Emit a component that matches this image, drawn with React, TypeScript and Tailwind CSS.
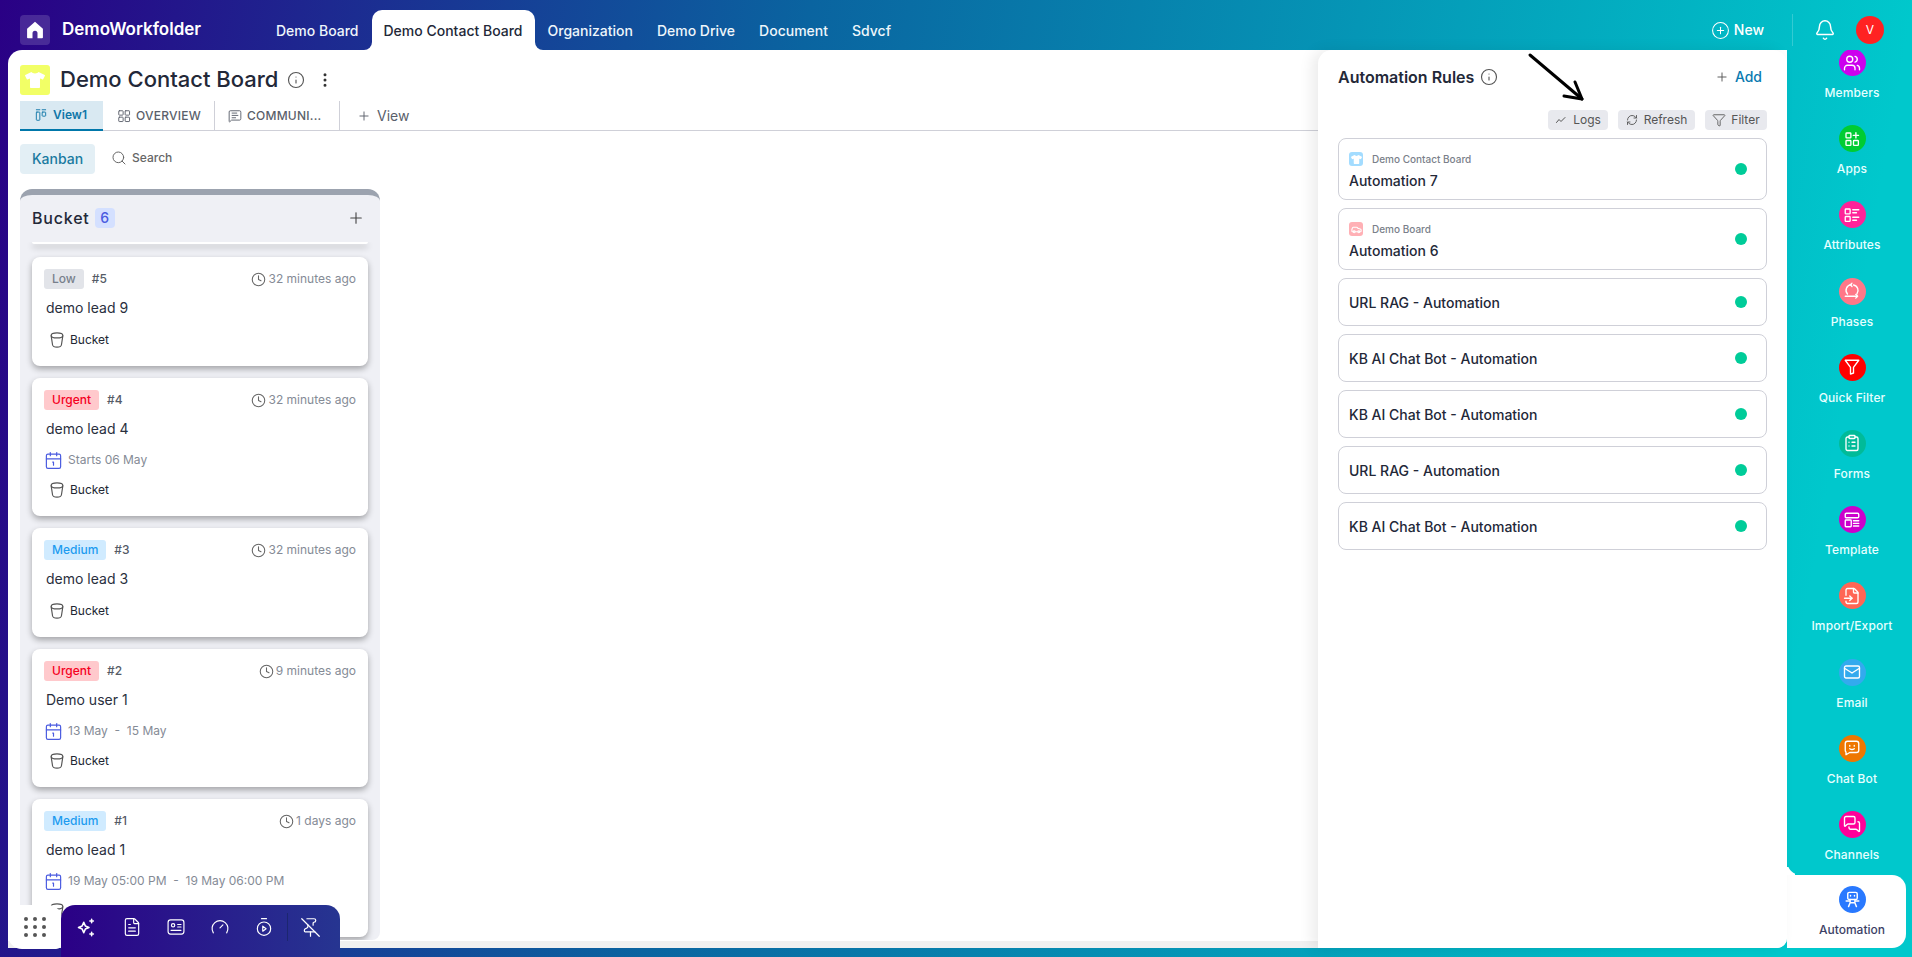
import { Bell, Calendar1, Car, CirclePlus, ClipboardList, Clock, EllipsisVertical, FileInput, FileText, Funnel, Info, Mail, MessagesSquare, MessageSquareText, PinOff, Plus, RefreshCw, Search, Users } from 'lucide-react';
import { FaTshirt } from 'react-icons/fa';
import type { ReactNode } from 'react';

const Svg = ({ size = 18, width = 1.8, children }: { size?: number; width?: number; children: ReactNode }) => (
  <svg width={size} height={size} viewBox="0 0 24 24" fill="none" stroke="currentColor" strokeWidth={width} strokeLinecap="round" strokeLinejoin="round" className="shrink-0">
    {children}
  </svg>
);

const BucketIcon = () => (
  <Svg size={20} width={1.4}>
    <ellipse cx="12" cy="6.500" rx="7" ry="3" />
    <path d="M5 7l1.700 11c.3 1.500 2.500 2.500 5.300 2.500s5-1 5.300-2.500L19 7" />
  </Svg>
);

const AppsIcon = () => (
  <Svg>
    <rect x="4" y="4" width="6.500" height="6.500" rx="1" />
    <rect x="4" y="14" width="6.500" height="6.500" rx="1" />
    <rect x="14" y="14" width="6.500" height="6.500" rx="1" />
    <path d="M17.200 3.500v7M13.700 7.200h7" />
  </Svg>
);

const AttributesIcon = () => (
  <Svg>
    <rect x="3" y="4" width="6.500" height="6.500" rx="1" />
    <rect x="3" y="14" width="6.500" height="6.500" rx="1" />
    <path d="M13 5h8M13 9h5M13 15h8M13 19h5" />
  </Svg>
);

const PhasesIcon = () => (
  <Svg>
    <path d="M6 16a7.500 7.500 0 0 1 5-12.500M14 4a7.500 7.500 0 0 1 4.500 12" />
    <path d="M3 19h16" />
    <path d="M17 16.500l2.500 2.500L17 21.500M12 1.500L9.800 3.700 12 6" />
  </Svg>
);

const TemplateIcon = () => (
  <Svg>
    <rect x="3" y="3" width="18" height="6" rx="1.500" />
    <rect x="3" y="12" width="8" height="9" rx="1" />
    <path d="M14 13h7M14 16.500h7M14 20h7" />
  </Svg>
);

const ChatBotIcon = () => (
  <Svg>
    <path d="M6 3h12a3 3 0 0 1 3 3v9a3 3 0 0 1-3 3H9l-5 3v-3.500A3 3 0 0 1 3 15V6a3 3 0 0 1 3-3z" />
    <path d="M9 8.500v1M15 8.500v1M9 13c1.800 1.300 4.200 1.300 6 0" />
  </Svg>
);

const RobotIcon = () => (
  <Svg size={19}>
    <rect x="6" y="3" width="12" height="9" rx="2" />
    <path d="M9.500 7v.5M14.500 7v.5M9 12v4h6v-4M4 14h5M15 14h5M9 16l-2 5M15 16l2 5" />
  </Svg>
);

const FunnelWide = () => (
  <Svg>
    <path d="M3 3h18l-7 9.500V20l-4 1.500v-9z" />
  </Svg>
);

const KanbanIcon = () => (
  <Svg size={14} width={1.6}>
    <path d="M4 3h6M14 3h6" />
    <rect x="4" y="7" width="6" height="14" rx="1" />
    <rect x="14" y="7" width="6" height="7" rx="1" />
  </Svg>
);

const OverviewIcon = () => (
  <Svg size={14} width={1.6}>
    <rect x="3" y="3" width="7.500" height="7.500" rx="1" />
    <rect x="14" y="3" width="7.500" height="7.500" rx="1" />
    <rect x="3" y="14" width="7.500" height="7.500" rx="1" />
    <rect x="14" y="14" width="7.500" height="7.500" rx="1" />
  </Svg>
);

const LogsIcon = () => (
  <Svg size={12} width={2}>
    <path d="M3 17l5-6 4 4 8-8" />
  </Svg>
);

const navTabs = ['Demo Board', 'Demo Contact Board', 'Organization', 'Demo Drive', 'Document', 'Sdvcf'];

const sideItems = [
  { label: 'Members', color: 'bg-[#cc00ee]', icon: <Users size={18} strokeWidth={1.8} /> },
  { label: 'Apps', color: 'bg-[#00cc33]', icon: <AppsIcon /> },
  { label: 'Attributes', color: 'bg-[#ff2299]', icon: <AttributesIcon /> },
  { label: 'Phases', color: 'bg-[#ff7788]', icon: <PhasesIcon /> },
  { label: 'Quick Filter', color: 'bg-[#ff0000]', icon: <FunnelWide /> },
  { label: 'Forms', color: 'bg-[#00bb99]', icon: <ClipboardList size={18} strokeWidth={1.8} /> },
  { label: 'Template', color: 'bg-[#cc00cc]', icon: <TemplateIcon /> },
  { label: 'Import/Export', color: 'bg-[#ff6655]', icon: <FileInput size={18} strokeWidth={1.8} /> },
  { label: 'Email', color: 'bg-[#33aaee]', icon: <Mail size={18} strokeWidth={1.8} /> },
  { label: 'Chat Bot', color: 'bg-[#ee7700]', icon: <ChatBotIcon /> },
  { label: 'Channels', color: 'bg-[#ff0099]', icon: <MessagesSquare size={18} strokeWidth={1.8} /> },
];

const priorityStyles: Record<string, string> = {
  Low: 'bg-[#e2e4e9] text-[#777f8b]',
  Urgent: 'bg-[#ffc9cc] text-[#f5001e]',
  Medium: 'bg-[#d0ebff] text-[#1d9bf0]',
};

const leads = [
  { priority: 'Low', id: '#5', time: '32 minutes ago', title: 'demo lead 9' },
  { priority: 'Urgent', id: '#4', time: '32 minutes ago', title: 'demo lead 4', date: 'Starts 06 May' },
  { priority: 'Medium', id: '#3', time: '32 minutes ago', title: 'demo lead 3' },
  { priority: 'Urgent', id: '#2', time: '9 minutes ago', title: 'Demo user 1', date: '13 May  -  15 May' },
  { priority: 'Medium', id: '#1', time: '1 days ago', title: 'demo lead 1', date: '19 May 05:00 PM  -  19 May 06:00 PM' },
];

const rules = ['URL RAG - Automation', 'KB AI Chat Bot - Automation', 'KB AI Chat Bot - Automation', 'URL RAG - Automation', 'KB AI Chat Bot - Automation'];

const LeadCard = ({ lead }: { lead: (typeof leads)[number] }) => (
  <div className="shrink-0 mx-3 mb-3 bg-white rounded-[8px] shadow-[0_3px_6px_rgba(0,0,0,0.32)] pt-3 pb-4 px-3">
    <div className="flex items-center h-5">
      <span className={`h-5 px-2 rounded-[3px] text-xs font-medium leading-5 ${priorityStyles[lead.priority]}`}>{lead.priority}</span>
      <span className="ml-2 text-xs font-medium text-[#555b66]">{lead.id}</span>
      <span className="ml-auto flex items-center gap-[2px] text-xs text-[#858b96]">
        <Clock size={15} strokeWidth={1.7} className="text-[#666]" />
        {lead.time}
      </span>
    </div>
    <div className="mt-[9px] pl-[2px] text-sm leading-5 text-[#2a2f3e]">{lead.title}</div>
    {lead.date && (
      <div className="mt-[11px] flex items-center gap-[5px] h-5 text-xs text-[#858b96] whitespace-pre">
        <Calendar1 size={19} strokeWidth={1.5} className="text-[#4a5be0]" />
        {lead.date}
      </div>
    )}
    <div className={`${lead.date ? 'mt-[10px]' : 'mt-3'} pl-[3px] flex items-center gap-[3px] h-5 text-xs text-[#222733] [&>svg]:text-[#555]`}>
      <BucketIcon />
      Bucket
    </div>
  </div>
);

export default function App() {
  return (
    <div className="relative h-screen w-full flex flex-col overflow-hidden font-['Inter',sans-serif] bg-[linear-gradient(100deg,#2a0085_0%,#0a64a0_39%,#00c8cc_92%)]">
      {/* Top bar */}
      <div className="h-[50px] shrink-0 flex items-center pt-[10px] pl-5 pr-7">
        <div className="w-[30px] h-[30px] rounded-[4px] bg-white/15 flex items-center justify-center">
          <svg width="20" height="20" viewBox="0 0 24 24" fill="white">
            <path d="M12 2L2.500 10.500V21a1 1 0 0 0 1 1H9v-6a3 3 0 0 1 6 0v6h5.500a1 1 0 0 0 1-1V10.500z" />
          </svg>
        </div>
        <div className="ml-3 w-[202px] text-[17px] font-semibold text-white">DemoWorkfolder</div>
        <div className="self-end flex h-10">
          {navTabs.map((tab) =>
            tab === 'Demo Contact Board' ? (
              <div key={tab} className="relative mx-[1px] px-3 h-10 bg-white rounded-t-[10px] text-sm font-medium leading-[42px] text-[#232838]">
                {tab}
                <span className="absolute bottom-0 -left-2 w-2 h-2 overflow-hidden">
                  <span className="block w-4 h-4 -ml-2 -mt-2 rounded-full shadow-[4px_4px_0_4px_#fff]" />
                </span>
                <span className="absolute bottom-0 -right-2 w-2 h-2 overflow-hidden">
                  <span className="block w-4 h-4 -mt-2 rounded-full shadow-[-4px_4px_0_4px_#fff]" />
                </span>
              </div>
            ) : (
              <div key={tab} className="px-3 text-sm font-medium leading-[42px] text-[#eef6fb]">
                {tab}
              </div>
            ),
          )}
        </div>
        <div className="ml-auto flex items-center gap-[4px] text-sm font-medium text-white">
          <CirclePlus size={19} strokeWidth={1.3} />
          New
        </div>
        <div className="ml-[28px] w-px h-[32px] bg-white/20" />
        <Bell size={22} strokeWidth={1.6} className="ml-[21px] text-white" />
        <div className="ml-5 w-7 h-7 rounded-full bg-[#ff2222] flex items-center justify-center text-xs text-white">V</div>
      </div>

      <div className="flex-1 min-h-0 flex">
        {/* Main panel */}
        <div className="ml-2 mb-[9px] flex-1 min-w-0 flex bg-white rounded-tl-[14px] rounded-br-[10px]">
          <div className="flex-1 min-w-0 flex flex-col">
            <div className="mt-[15px] ml-3 h-[30px] flex items-center">
              <div className="-mt-[1px] w-[30px] h-[30px] rounded-[3px] bg-[#f2ff66] flex items-center justify-center text-white">
                <FaTshirt size={20} />
              </div>
              <h1 className="ml-[10px] -mt-[2px] text-[22px] font-medium text-[#232838]">Demo Contact Board</h1>
              <Info size={18} strokeWidth={1.5} className="ml-[9px] -mt-[1px] text-[#555]" />
              <EllipsisVertical size={18} className="ml-[11px] -mt-[1px] text-[#333]" />
            </div>

            {/* View tabs */}
            <div className="mt-[6px] ml-3 h-[30px] flex border-b border-[#cfd0d8]">
              <div className="w-[83px] bg-[#d9e9f2] border-b-2 border-[#0077aa] -mb-px flex items-center justify-center gap-[5px] pr-[2px] text-xs font-semibold text-[#0f76a8]">
                <KanbanIcon />
                View1
              </div>
              <div className="w-[111px] ml-[1px] border-r border-[#cfd0d8] flex items-center pl-[13px] gap-[5px] text-xs font-medium tracking-[0.02em] text-[#5a5f6b]">
                <OverviewIcon />
                OVERVIEW
              </div>
              <div className="w-[125px] border-r border-[#cfd0d8] flex items-center pl-[13px] gap-[5px] text-xs font-medium tracking-[0.02em] text-[#5a5f6b]">
                <MessageSquareText size={14} strokeWidth={1.6} />
                COMMUNI...
              </div>
              <div className="ml-[17px] flex items-center gap-[6px] text-sm text-[#5a5f6b]">
                <Plus size={14} strokeWidth={1.6} />
                View
              </div>
            </div>

            <div className="mt-[13px] ml-3 flex items-center h-[30px]">
              <div className="w-[75px] h-[30px] rounded-[4px] bg-[#e3eff5] flex items-center justify-center text-sm font-medium text-[#1a7aa0]">Kanban</div>
              <div className="ml-4 -mt-[2px] flex items-center gap-[5px] text-xs font-medium text-[#666]">
                <Search size={16} strokeWidth={1.5} />
                Search
              </div>
            </div>

            {/* Column */}
            <div className="mt-[15px] ml-3 w-[360px] flex-1 min-h-0 flex flex-col overflow-hidden rounded-t-[12px] rounded-b-[8px] bg-[#eff0f5] border-t-[6px] border-[#9ca3af]">
              <div className="shrink-0 h-[47px] pb-[2px] flex items-center px-3">
                <span className="text-base font-medium text-[#232838] tracking-[0.05em]">Bucket</span>
                <span className="ml-[5px] w-[20px] h-5 rounded-[4px] bg-[#d4e0ff] text-center text-sm leading-5 font-medium text-[#4a5be0]">6</span>
                <Plus size={18} strokeWidth={1.5} className="ml-auto mr-[3px] text-[#444]" />
              </div>
              <div className="flex-1 min-h-0 overflow-hidden flex flex-col">
                <div className="shrink-0 mx-3 mb-[13px] h-[2px] bg-white rounded-b-[8px] shadow-[0_3px_6px_rgba(0,0,0,0.32)]" />
                {leads.map((lead) => (
                  <LeadCard key={lead.id} lead={lead} />
                ))}
              </div>
            </div>
            <div className="shrink-0 h-[7px] mt-[1px] bg-[#f0f0f0]" />
          </div>

          {/* Automation rules */}
          <div className="relative w-[469px] shrink-0 bg-white rounded-t-[14px] rounded-br-[10px] shadow-[-6px_0_14px_rgba(0,0,0,0.08)] px-5">
            <div className="mt-[17px] flex items-center h-5">
              <span className="text-base font-semibold text-[#232838]">Automation Rules</span>
              <Info size={18} strokeWidth={1.5} className="ml-[6px] text-[#555]" />
              <Plus size={14} strokeWidth={1.6} className="ml-auto text-[#555]" />
              <span className="ml-[6px] mr-[5px] text-sm font-medium text-[#0a7ab0]">Add</span>
            </div>
            <div className="mt-[23px] flex justify-end gap-[10px]">
              <div className="h-5 w-[60px] rounded-[4px] bg-[#e8e9ee] flex items-center justify-center gap-[6px] text-xs text-[#555]">
                <LogsIcon />
                Logs
              </div>
              <div className="h-5 w-[77px] rounded-[4px] bg-[#e8e9ee] flex items-center justify-center gap-[6px] text-xs text-[#555]">
                <RefreshCw size={12} strokeWidth={1.8} />
                Refresh
              </div>
              <div className="h-5 w-[62px] rounded-[4px] bg-[#e8e9ee] flex items-center justify-center gap-[5px] text-xs text-[#555]">
                <Funnel size={14} strokeWidth={1.5} />
                Filter
              </div>
            </div>
            <div className="mt-2 flex flex-col gap-2">
              <div className="h-[62px] rounded-[8px] border border-[#cfd0d8] pl-[10px] pr-[19px] flex items-center justify-between">
                <div className="pt-[4px]">
                  <div className="flex items-center gap-[9px] text-[10px] font-medium text-[#7a7f8a]">
                    <span className="w-[14px] h-[14px] rounded-[3px] bg-[#a3dcff] flex items-center justify-center text-white">
                      <FaTshirt size={11} />
                    </span>
                    Demo Contact Board
                  </div>
                  <div className="mt-[4px] text-sm font-medium text-[#232838]">Automation 7</div>
                </div>
                <span className="w-3 h-3 rounded-full bg-[#00cc99]" />
              </div>
              <div className="h-[62px] rounded-[8px] border border-[#cfd0d8] pl-[10px] pr-[19px] flex items-center justify-between">
                <div className="pt-[4px]">
                  <div className="flex items-center gap-[9px] text-[10px] font-medium text-[#7a7f8a]">
                    <span className="w-[14px] h-[14px] rounded-[3px] bg-[#ffb0b5] flex items-center justify-center text-white">
                      <Car size={11} strokeWidth={2.4} />
                    </span>
                    Demo Board
                  </div>
                  <div className="mt-[4px] text-sm font-medium text-[#232838]">Automation 6</div>
                </div>
                <span className="w-3 h-3 rounded-full bg-[#00cc99]" />
              </div>
              {rules.map((rule, i) => (
                <div key={i} className="h-12 rounded-[8px] border border-[#cfd0d8] pl-[10px] pr-[19px] flex items-center justify-between">
                  <span className="pt-[2px] text-sm font-medium text-[#232838]">{rule}</span>
                  <span className="w-3 h-3 rounded-full bg-[#00cc99]" />
                </div>
              ))}
            </div>
            {/* hand drawn arrow on the screenshot */}
            <svg className="absolute left-[208px] top-[2px]" width="60" height="52" viewBox="0 0 60 52" fill="none" stroke="black" strokeWidth="3" strokeLinecap="round" strokeLinejoin="round">
              <path d="M4 3l52 44" />
              <path d="M49 30l7 17-18-3" />
            </svg>
          </div>
        </div>

        {/* Right rail */}
        <div className="w-[125px] shrink-0 flex flex-col">
          <div className="relative h-[825px] shrink-0 overflow-hidden">
            <div className="-mt-[1px] pl-[5px] flex flex-col">
              {sideItems.map((item) => (
                <div key={item.label} className="h-[76.200px] shrink-0 flex flex-col items-center">
                  <div className={`w-[27px] h-[27px] rounded-full ${item.color} flex items-center justify-center text-white`}>{item.icon}</div>
                  <div className="mt-[9px] text-xs font-medium leading-4 tracking-[0.01em] text-[#e6ffff]">{item.label}</div>
                </div>
              ))}
            </div>
            <div className="absolute left-0 bottom-0 w-4 h-4 rounded-bl-[14px] shadow-[-8px_8px_0_0_#fff]" />
          </div>
          <div className="w-[119px] h-[73px] bg-white rounded-r-[14px] flex flex-col items-center pt-[11px] pl-[11px]">
            <div className="w-[27px] h-[27px] rounded-full bg-[#2979ff] flex items-center justify-center text-white">
              <RobotIcon />
            </div>
            <div className="mt-[9px] text-xs font-medium leading-4 text-[#3c3f66]">Automation</div>
          </div>
        </div>
      </div>

      {/* Floating toolbar */}
      <div className="absolute left-2 bottom-0 flex items-stretch">
        <div className="w-[54px] h-[44px] mb-2 bg-white rounded-bl-[14px] rounded-tr-[14px] rounded-br-[6px] grid grid-cols-3 gap-1 place-items-center px-[16px] py-[10px] content-center">
          {Array.from({ length: 9 }).map((_, i) => (
            <span key={i} className="w-1 h-1 rounded-full bg-[#555]" />
          ))}
        </div>
        <div className="w-[279px] h-[52px] rounded-tr-[14px] rounded-tl-[14px] -ml-[1px] bg-[linear-gradient(90deg,#2b0086,#263591)] text-white">
          <div className="h-[44px] flex items-center">
            <div className="w-12 flex justify-center">
              <Svg size={21} width={1.8}>
                <path d="M10 6l1.800 4.200L16 12l-4.200 1.800L10 18l-1.800-4.200L4 12l4.200-1.800z" />
                <path d="M19 2.500v4M17 4.500h4M19 17.500v4M17 19.500h4" />
              </Svg>
            </div>
            <div className="w-[45px] flex justify-center">
              <FileText size={20} strokeWidth={1.4} />
            </div>
            <div className="w-11 flex justify-center">
              <Svg size={20} width={1.4}>
                <rect x="2.500" y="3.500" width="19" height="17" rx="3" />
                <circle cx="8.500" cy="10" r="2" />
                <path d="M14 9h4M14 12h4M6 16h12" />
              </Svg>
            </div>
            <div className="w-11 flex justify-center">
              <Svg size={20} width={1.4}>
                <path d="M4 19a9.500 9.500 0 1 1 16 0" />
                <path d="M12 13l3.500-3.500" />
              </Svg>
            </div>
            <div className="w-11 flex justify-center">
              <Svg size={20} width={1.4}>
                <circle cx="12" cy="14" r="8" />
                <path d="M9 2h6" />
                <path d="M10.500 11l4 3-4 3z" />
              </Svg>
            </div>
            <div className="ml-[1px] w-px h-[28px] bg-[#1c2670]" />
            <div className="w-11 flex justify-center">
              <PinOff size={21} strokeWidth={1.4} />
            </div>
          </div>
        </div>
      </div>
    </div>
  );
}
